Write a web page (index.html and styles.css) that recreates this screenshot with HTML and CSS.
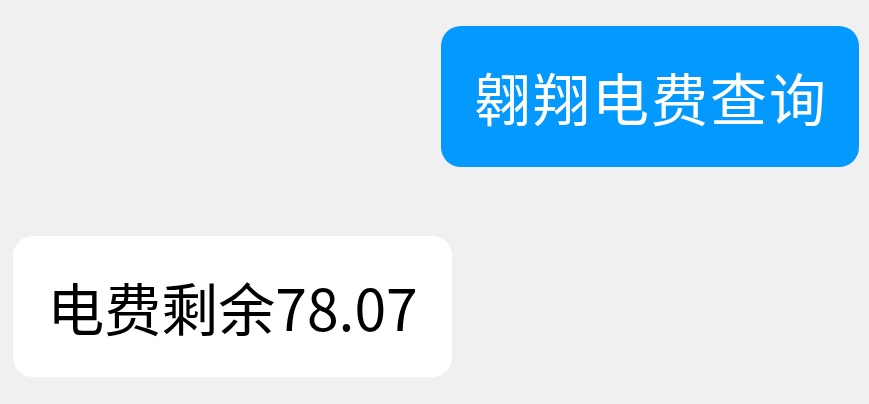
FILE: index.html
```html
<!DOCTYPE html>
<html lang="zh-CN">
<head>
<meta charset="utf-8">
<link rel="stylesheet" href="styles.css">
</head>
<body>
<div class="chat">
  <div class="row row-right">
    <div class="bubble bubble-blue">翱翔电费查询</div>
  </div>
  <div class="row row-left">
    <div class="bubble bubble-white">电费剩余78.07</div>
  </div>
</div>
</body>
</html>
```
FILE: styles.css
```css
html, body {
  margin: 0;
  padding: 0;
  background: #f0f0f0;
}
body {
  width: 869px;
  height: 404px;
  overflow: hidden;
  font-family: "Noto Sans CJK SC", "Noto Sans", sans-serif;
}
.chat {
  display: flex;
  flex-direction: column;
  gap: 69px;
  padding: 26px 10px 0 13px;
}
.row {
  display: flex;
}
.row-right {
  justify-content: flex-end;
}
.row-left {
  justify-content: flex-start;
}
.bubble {
  height: 141px;
  box-sizing: border-box;
  display: flex;
  align-items: center;
  justify-content: center;
  border-radius: 20px;
  font-size: 57px;
  line-height: 1;
}
.bubble-blue {
  width: 418px;
  padding-left: 2px;
  background: #0399fe;
  color: #ffffff;
  letter-spacing: 2px;
}
.bubble-white {
  width: 439px;
  background: #ffffff;
  color: #000000;
}
```
